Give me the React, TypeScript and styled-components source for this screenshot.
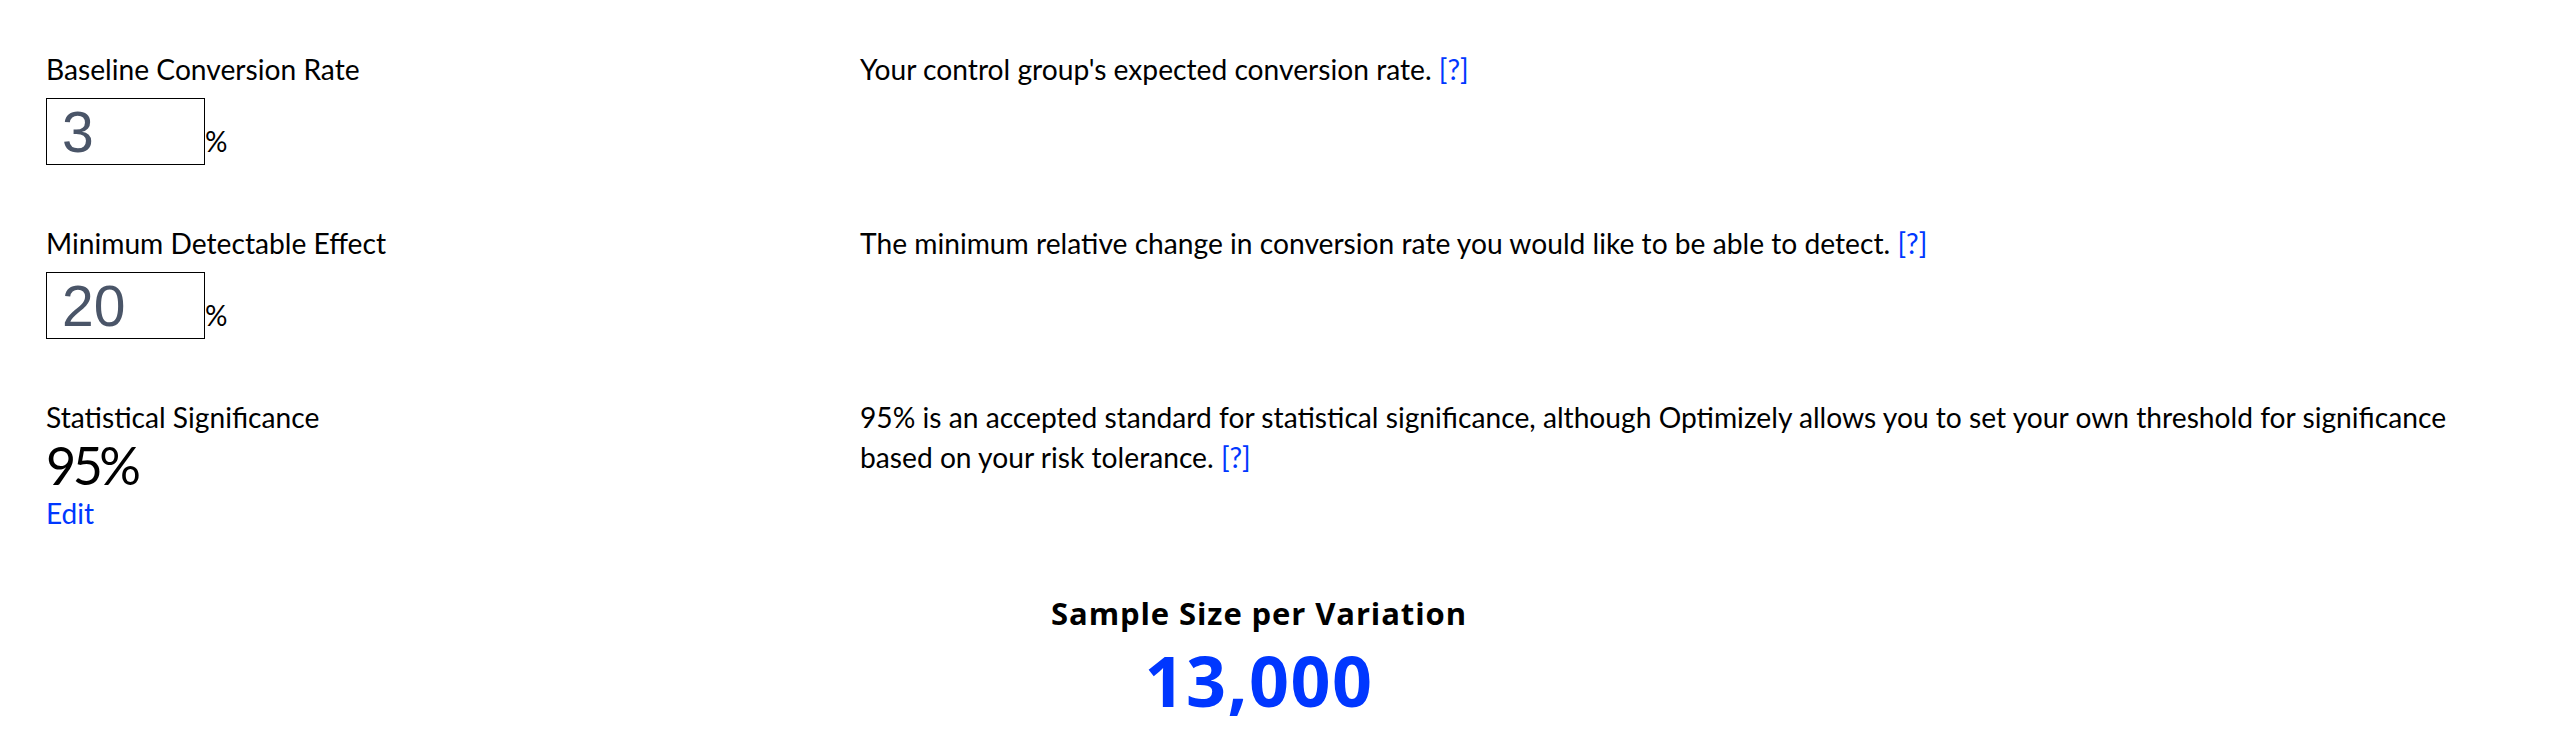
import React from "react";
import styled, { createGlobalStyle } from "styled-components";

const GlobalStyle = createGlobalStyle`
  html, body {
    margin: 0;
    padding: 0;
    background: #ffffff;
  }
  body {
    font-family: Lato, "Noto Sans", "Liberation Sans", sans-serif;
    color: #000000;
  }
`;

const Page = styled.div`
  padding: 49px 46px 40px 46px;
  display: flex;
  flex-direction: column;
`;

const Row = styled.div`
  display: grid;
  grid-template-columns: 814px 1fr;
  margin-bottom: 58px;
  &:last-of-type {
    margin-bottom: 0;
  }
`;

const Field = styled.div`
  display: flex;
  flex-direction: column;
  align-items: flex-start;
`;

const Label = styled.div`
  font-size: 28.2px;
  line-height: 40px;
`;

const InputRow = styled.div`
  display: flex;
  align-items: baseline;
  margin-top: 9px;
`;

const NumberInput = styled.input`
  box-sizing: border-box;
  width: 159px;
  height: 67px;
  border: 1px solid #000000;
  border-radius: 0;
  padding: 0 12px 0 15px;
  margin: 0;
  font-family: "Liberation Sans", Arial, sans-serif;
  font-size: 57px;
  color: #4a5568;
  background: #ffffff;
  outline: none;
`;

const Unit = styled.span`
  font-size: 28px;
  line-height: 40px;
`;

const BigValue = styled.div`
  font-size: 52px;
  line-height: 56px;
  letter-spacing: -3.5px;
`;

const LinkText = styled.a`
  color: #0037ff;
  text-decoration: none;
  cursor: pointer;
`;

const EditLink = styled(LinkText)`
  font-size: 28px;
  line-height: 40px;
`;

const Help = styled.p`
  margin: 0;
  font-size: 28.2px;
  line-height: 40px;
`;

const Result = styled.section`
  display: flex;
  flex-direction: column;
  align-items: center;
  margin-top: 60px;
  margin-right: 36px;
`;

const ResultTitle = styled.h2`
  margin: 0;
  font-family: "Open Sans", Lato, sans-serif;
  font-size: 31px;
  line-height: 40px;
  font-weight: 700;
  letter-spacing: 0.9px;
`;

const ResultValue = styled.div`
  margin-top: 12px;
  font-family: "Open Sans", Lato, sans-serif;
  font-size: 70px;
  line-height: 70px;
  font-weight: 700;
  letter-spacing: 1.5px;
  color: #0037ff;
`;

export default function App() {
  return (
    <>
      <GlobalStyle />
      <Page>
        <Row>
          <Field>
            <Label>Baseline Conversion Rate</Label>
            <InputRow>
              <NumberInput type="text" defaultValue="3" />
              <Unit>%</Unit>
            </InputRow>
          </Field>
          <Help>
            Your control group's expected conversion rate. <LinkText>[?]</LinkText>
          </Help>
        </Row>
        <Row>
          <Field>
            <Label>Minimum Detectable Effect</Label>
            <InputRow>
              <NumberInput type="text" defaultValue="20" />
              <Unit>%</Unit>
            </InputRow>
          </Field>
          <Help>
            The minimum relative change in conversion rate you would like to be able to detect.{" "}
            <LinkText>[?]</LinkText>
          </Help>
        </Row>
        <Row>
          <Field>
            <Label>Statistical Significance</Label>
            <BigValue>95%</BigValue>
            <EditLink>Edit</EditLink>
          </Field>
          <Help>
            95% is an accepted standard for statistical significance, although Optimizely allows you to set
            your own threshold for significance based on your risk tolerance. <LinkText>[?]</LinkText>
          </Help>
        </Row>
        <Result>
          <ResultTitle>Sample Size per Variation</ResultTitle>
          <ResultValue>13,000</ResultValue>
        </Result>
      </Page>
    </>
  );
}
